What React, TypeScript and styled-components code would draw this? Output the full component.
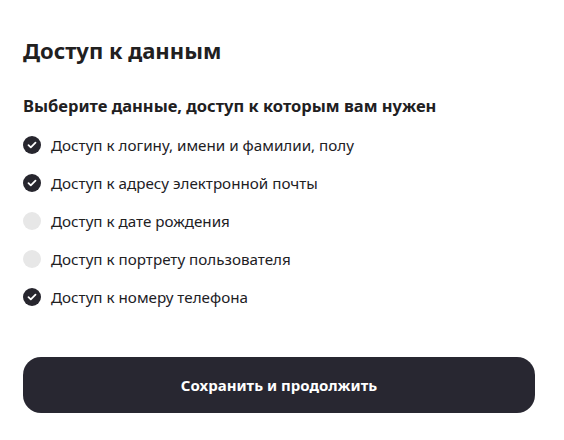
import React, { useState } from 'react'
import styled, { createGlobalStyle } from 'styled-components'

const GlobalStyle = createGlobalStyle`
  html, body {
    margin: 0;
    padding: 0;
    background: #fff;
  }
  body {
    font-family: 'Noto Sans', 'Open Sans', Arial, sans-serif;
    color: #21201f;
  }
`

const Page = styled.div`
  width: 564px;
  height: 440px;
  box-sizing: border-box;
  padding: 34px 29px 0 23px;
`

const Title = styled.h1`
  margin: 0;
  font-size: 22px;
  line-height: 32px;
  font-weight: 700;
`

const Subtitle = styled.h2`
  margin: 28px 0 0;
  font-size: 16.5px;
  line-height: 24px;
  font-weight: 700;
`

const List = styled.div`
  display: flex;
  flex-direction: column;
  margin-top: 8px;
`

const Row = styled.label`
  display: flex;
  align-items: center;
  height: 38px;
  gap: 10px;
  cursor: pointer;
  font-size: 15.2px;
`

const Box = styled.span<{ checked: boolean }>`
  width: 18px;
  height: 18px;
  border-radius: 50%;
  flex: none;
  display: flex;
  align-items: center;
  justify-content: center;
  background: ${({ checked }) => (checked ? '#27262e' : '#e7e7e7')};
`

const SaveButton = styled.button`
  display: block;
  width: 512px;
  height: 56px;
  margin-top: 41px;
  border: none;
  border-radius: 18px;
  background: #282731;
  color: #fff;
  font-family: inherit;
  font-size: 15px;
  font-weight: 700;
  cursor: pointer;
`

const items = [
  { label: 'Доступ к логину, имени и фамилии, полу', checked: true },
  { label: 'Доступ к адресу электронной почты', checked: true },
  { label: 'Доступ к дате рождения', checked: false },
  { label: 'Доступ к портрету пользователя', checked: false },
  { label: 'Доступ к номеру телефона', checked: true },
]

export default function App() {
  const [state, setState] = useState(items.map(i => i.checked))

  return (
    <Page>
      <GlobalStyle />
      <Title>Доступ к данным</Title>
      <Subtitle>Выберите данные, доступ к которым вам нужен</Subtitle>
      <List>
        {items.map((item, i) => (
          <Row key={item.label} onClick={() => setState(s => s.map((v, j) => (j === i ? !v : v)))}>
            <Box checked={state[i]}>
              {state[i] && (
                <svg width="10" height="8" viewBox="0 0 10 8">
                  <path d="M1.5 4.2L3.8 6.3L8.5 1.7" stroke="#fff" strokeWidth="1.8" fill="none" strokeLinecap="round" strokeLinejoin="round" />
                </svg>
              )}
            </Box>
            {item.label}
          </Row>
        ))}
      </List>
      <SaveButton>Сохранить и продолжить</SaveButton>
    </Page>
  )
}
